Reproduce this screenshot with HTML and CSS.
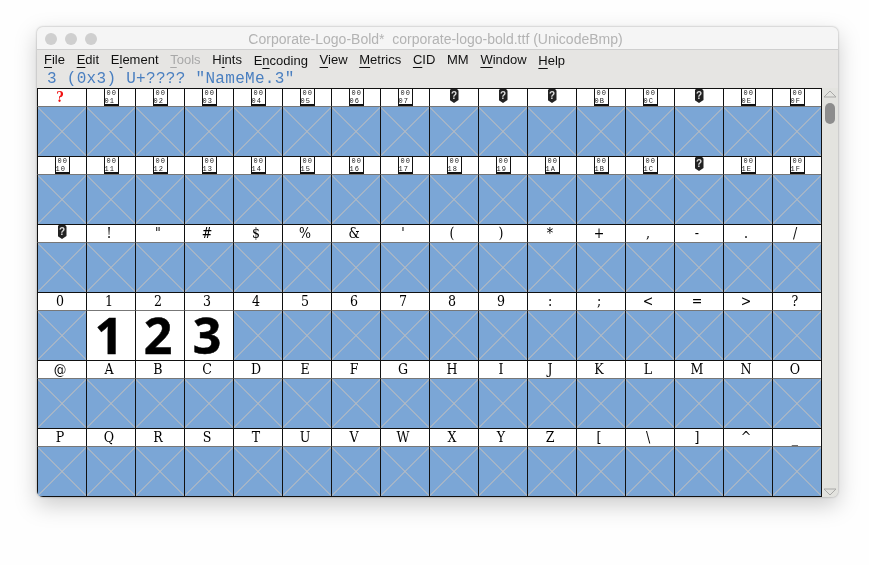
FILE: index.html
```html
<!DOCTYPE html>
<html lang="en">

<head>
  <meta charset="utf-8" />
  <title>Corporate-Logo-Bold</title>
  <link rel="stylesheet" href="styles.css">
</head>

<body>
  <div class="desktop">
  <div class="window">
    <div class="titlebar">
      <span class="light"></span><span class="light"></span><span class="light"></span>
      <span class="title">Corporate-Logo-Bold*&nbsp; corporate-logo-bold.ttf (UnicodeBmp)</span>
    </div>

    <div class="menubar">
      <span><u>F</u>ile</span>
      <span><u>E</u>dit</span>
      <span>E<u>l</u>ement</span>
      <span class="disabled"><u>T</u>ools</span>
      <span>H<u>i</u>nts</span>
      <span class="low">E<u>n</u>coding</span>
      <span><u>V</u>iew</span>
      <span><u>M</u>etrics</span>
      <span><u>C</u>ID</span>
      <span>MM</span>
      <span><u>W</u>indow</span>
      <span class="low"><u>H</u>elp</span>
    </div>
    <div class="info">3 (0x3) U+???? "NameMe.3"</div>

    <div class="view">
      <div class="grid">
        <!-- 0x00 -->
        <div class="label notdef">?</div>
        <div class="label"><span class="hex">00<br>01</span></div>
        <div class="label"><span class="hex">00<br>02</span></div>
        <div class="label"><span class="hex">00<br>03</span></div>
        <div class="label"><span class="hex">00<br>04</span></div>
        <div class="label"><span class="hex">00<br>05</span></div>
        <div class="label"><span class="hex">00<br>06</span></div>
        <div class="label"><span class="hex">00<br>07</span></div>
        <div class="label"><span class="shield">?</span></div>
        <div class="label"><span class="shield">?</span></div>
        <div class="label"><span class="shield">?</span></div>
        <div class="label"><span class="hex">00<br>0B</span></div>
        <div class="label"><span class="hex">00<br>0C</span></div>
        <div class="label"><span class="shield">?</span></div>
        <div class="label"><span class="hex">00<br>0E</span></div>
        <div class="label"><span class="hex">00<br>0F</span></div>
        <div class="cell"></div><div class="cell"></div><div class="cell"></div><div class="cell"></div>
        <div class="cell"></div><div class="cell"></div><div class="cell"></div><div class="cell"></div>
        <div class="cell"></div><div class="cell"></div><div class="cell"></div><div class="cell"></div>
        <div class="cell"></div><div class="cell"></div><div class="cell"></div><div class="cell"></div>

        <!-- 0x10 -->
        <div class="label"><span class="hex">00<br>10</span></div>
        <div class="label"><span class="hex">00<br>11</span></div>
        <div class="label"><span class="hex">00<br>12</span></div>
        <div class="label"><span class="hex">00<br>13</span></div>
        <div class="label"><span class="hex">00<br>14</span></div>
        <div class="label"><span class="hex">00<br>15</span></div>
        <div class="label"><span class="hex">00<br>16</span></div>
        <div class="label"><span class="hex">00<br>17</span></div>
        <div class="label"><span class="hex">00<br>18</span></div>
        <div class="label"><span class="hex">00<br>19</span></div>
        <div class="label"><span class="hex">00<br>1A</span></div>
        <div class="label"><span class="hex">00<br>1B</span></div>
        <div class="label"><span class="hex">00<br>1C</span></div>
        <div class="label"><span class="shield">?</span></div>
        <div class="label"><span class="hex">00<br>1E</span></div>
        <div class="label"><span class="hex">00<br>1F</span></div>
        <div class="cell"></div><div class="cell"></div><div class="cell"></div><div class="cell"></div>
        <div class="cell"></div><div class="cell"></div><div class="cell"></div><div class="cell"></div>
        <div class="cell"></div><div class="cell"></div><div class="cell"></div><div class="cell"></div>
        <div class="cell"></div><div class="cell"></div><div class="cell"></div><div class="cell"></div>

        <!-- 0x20 -->
        <div class="label"><span class="shield">?</span></div>
        <div class="label">!</div>
        <div class="label">"</div>
        <div class="label">#</div>
        <div class="label">$</div>
        <div class="label">%</div>
        <div class="label">&amp;</div>
        <div class="label">'</div>
        <div class="label">(</div>
        <div class="label">)</div>
        <div class="label">*</div>
        <div class="label">+</div>
        <div class="label">,</div>
        <div class="label">-</div>
        <div class="label">.</div>
        <div class="label">/</div>
        <div class="cell"></div><div class="cell"></div><div class="cell"></div><div class="cell"></div>
        <div class="cell"></div><div class="cell"></div><div class="cell"></div><div class="cell"></div>
        <div class="cell"></div><div class="cell"></div><div class="cell"></div><div class="cell"></div>
        <div class="cell"></div><div class="cell"></div><div class="cell"></div><div class="cell"></div>

        <!-- 0x30 -->
        <div class="label">0</div>
        <div class="label">1</div>
        <div class="label">2</div>
        <div class="label">3</div>
        <div class="label">4</div>
        <div class="label">5</div>
        <div class="label">6</div>
        <div class="label">7</div>
        <div class="label">8</div>
        <div class="label">9</div>
        <div class="label">:</div>
        <div class="label">;</div>
        <div class="label">&lt;</div>
        <div class="label">=</div>
        <div class="label">&gt;</div>
        <div class="label">?</div>
        <div class="cell"></div>
        <div class="cell filled">1</div>
        <div class="cell filled">2</div>
        <div class="cell filled">3</div>
        <div class="cell"></div><div class="cell"></div><div class="cell"></div><div class="cell"></div>
        <div class="cell"></div><div class="cell"></div><div class="cell"></div><div class="cell"></div>
        <div class="cell"></div><div class="cell"></div><div class="cell"></div><div class="cell"></div>

        <!-- 0x40 -->
        <div class="label">@</div>
        <div class="label">A</div>
        <div class="label">B</div>
        <div class="label">C</div>
        <div class="label">D</div>
        <div class="label">E</div>
        <div class="label">F</div>
        <div class="label">G</div>
        <div class="label">H</div>
        <div class="label">I</div>
        <div class="label">J</div>
        <div class="label">K</div>
        <div class="label">L</div>
        <div class="label">M</div>
        <div class="label">N</div>
        <div class="label">O</div>
        <div class="cell"></div><div class="cell"></div><div class="cell"></div><div class="cell"></div>
        <div class="cell"></div><div class="cell"></div><div class="cell"></div><div class="cell"></div>
        <div class="cell"></div><div class="cell"></div><div class="cell"></div><div class="cell"></div>
        <div class="cell"></div><div class="cell"></div><div class="cell"></div><div class="cell"></div>

        <!-- 0x50 -->
        <div class="label">P</div>
        <div class="label">Q</div>
        <div class="label">R</div>
        <div class="label">S</div>
        <div class="label">T</div>
        <div class="label">U</div>
        <div class="label">V</div>
        <div class="label">W</div>
        <div class="label">X</div>
        <div class="label">Y</div>
        <div class="label">Z</div>
        <div class="label">[</div>
        <div class="label">\</div>
        <div class="label">]</div>
        <div class="label">^</div>
        <div class="label">_</div>
        <div class="cell"></div><div class="cell"></div><div class="cell"></div><div class="cell"></div>
        <div class="cell"></div><div class="cell"></div><div class="cell"></div><div class="cell"></div>
        <div class="cell"></div><div class="cell"></div><div class="cell"></div><div class="cell"></div>
        <div class="cell"></div><div class="cell"></div><div class="cell"></div><div class="cell"></div>
      </div>

      <div class="scrollbar">
        <svg class="arrow" width="14" height="8" viewBox="0 0 14 8"><path d="M7 1 L13 7 L1 7 Z" fill="none" stroke="#a9a9a7" /></svg>
        <div class="thumb"></div>
        <svg class="arrow arrow_down" width="14" height="8" viewBox="0 0 14 8"><path d="M1 1 L13 1 L7 7 Z" fill="none" stroke="#a9a9a7" /></svg>
      </div>
    </div>
  </div>
  </div>
</body>

</html>
```

FILE: styles.css
```css
body {
  box-sizing: border-box;
  min-height: 100vh;
  margin: 0;
  padding: 27px 0 0 37px;
  background-color: #fefefe;
  font-family: "Liberation Sans", Arial, sans-serif;
}

.desktop {
  width: 801px;
  filter: drop-shadow(0 0 1px rgba(0, 0, 0, .3)) drop-shadow(0 8px 11px rgba(0, 0, 0, .2));
}

.window {
  border-radius: 6px;
  overflow: hidden;
  background-color: #e6e5e3;
}

.titlebar {
  display: flex;
  align-items: center;
  gap: 8px;
  height: 20px;
  padding: 2px 0 0 8px;
  background-color: #f5f5f5;
  border-bottom: 1px solid #cfcfcf;
}

.light {
  width: 12px;
  height: 12px;
  border-radius: 50%;
  background-color: #cfcfcf;
}

.title {
  flex: 1;
  padding-right: 72px;
  text-align: center;
  font-size: 14px;
  color: #b3b3b3;
  white-space: nowrap;
}

.menubar {
  display: flex;
  gap: 11.73px;
  height: 20px;
  padding-left: 7px;
  font-size: 13px;
  line-height: 20px;
  color: #111;
}

.menubar u {
  text-underline-offset: 3px;
}

.low {
  padding-top: 1px;
}

.disabled {
  color: #a8a8a8;
}

.info {
  height: 18px;
  padding-left: 10px;
  font-family: "Liberation Mono", monospace;
  font-size: 16px;
  letter-spacing: .3px;
  line-height: 18px;
  color: #4a7fc0;
}

.view {
  display: flex;
}

.grid {
  display: grid;
  grid-template-columns: repeat(16, 49px);
  box-sizing: border-box;
  width: 785px;
  border-right: 1px solid #111;
  border-bottom: 1px solid #111;
}

.label {
  box-sizing: border-box;
  height: 19px;
  border-top: 1px solid #111;
  border-left: 1px solid #111;
  border-bottom: 1px solid #777;
  background-color: #fff;
  text-align: center;
  text-indent: -4px;
  font-family: "DejaVu Serif Condensed", "DejaVu Serif", serif;
  font-size: 14px;
  line-height: 17px;
  color: #000;
}

.notdef {
  font-weight: bold;
  color: #f01010;
}

.hex {
  display: block;
  box-sizing: border-box;
  width: 15px;
  height: 18px;
  margin: -1px auto 0;
  border: 1px solid #111;
  border-bottom-width: 2px;
  font-family: "Liberation Mono", monospace;
  font-size: 7px;
  letter-spacing: 1px;
  line-height: 8px;
  text-align: left;
  text-indent: 2px;
  color: #222;
}

.shield {
  display: block;
  width: 9px;
  height: 14px;
  margin: 0 auto;
  clip-path: polygon(15% 0, 85% 0, 100% 12%, 100% 78%, 50% 100%, 0 78%, 0 12%);
  background-color: #222;
  font-family: "Liberation Sans", sans-serif;
  font-size: 10px;
  font-weight: bold;
  line-height: 13px;
  text-indent: 0;
  color: #ddd;
}

.cell {
  box-sizing: border-box;
  height: 49px;
  border-left: 1px solid #111;
  background-color: #7ba6d6;
  background-image:
    linear-gradient(45deg, transparent calc(50% - 1px), #b9bcc0 50%, transparent calc(50% + 1px)),
    linear-gradient(-45deg, transparent calc(50% - 1px), #b9bcc0 50%, transparent calc(50% + 1px));
}

.filled {
  padding-right: 4px;
  background: #fff;
  text-align: center;
  font-family: "Open Sans", sans-serif;
  font-size: 50px;
  font-weight: 700;
  line-height: 48px;
  color: #000;
  -webkit-text-stroke: .5px #000;
}

.scrollbar {
  display: flex;
  flex: 1;
  flex-direction: column;
  align-items: center;
  padding: 2px 0 1px;
  background-color: #e3e3df;
}

.thumb {
  width: 10px;
  height: 21px;
  margin-top: 5px;
  border-radius: 5px;
  background-color: #8d8d8d;
}

.arrow_down {
  margin-top: auto;
}
```
